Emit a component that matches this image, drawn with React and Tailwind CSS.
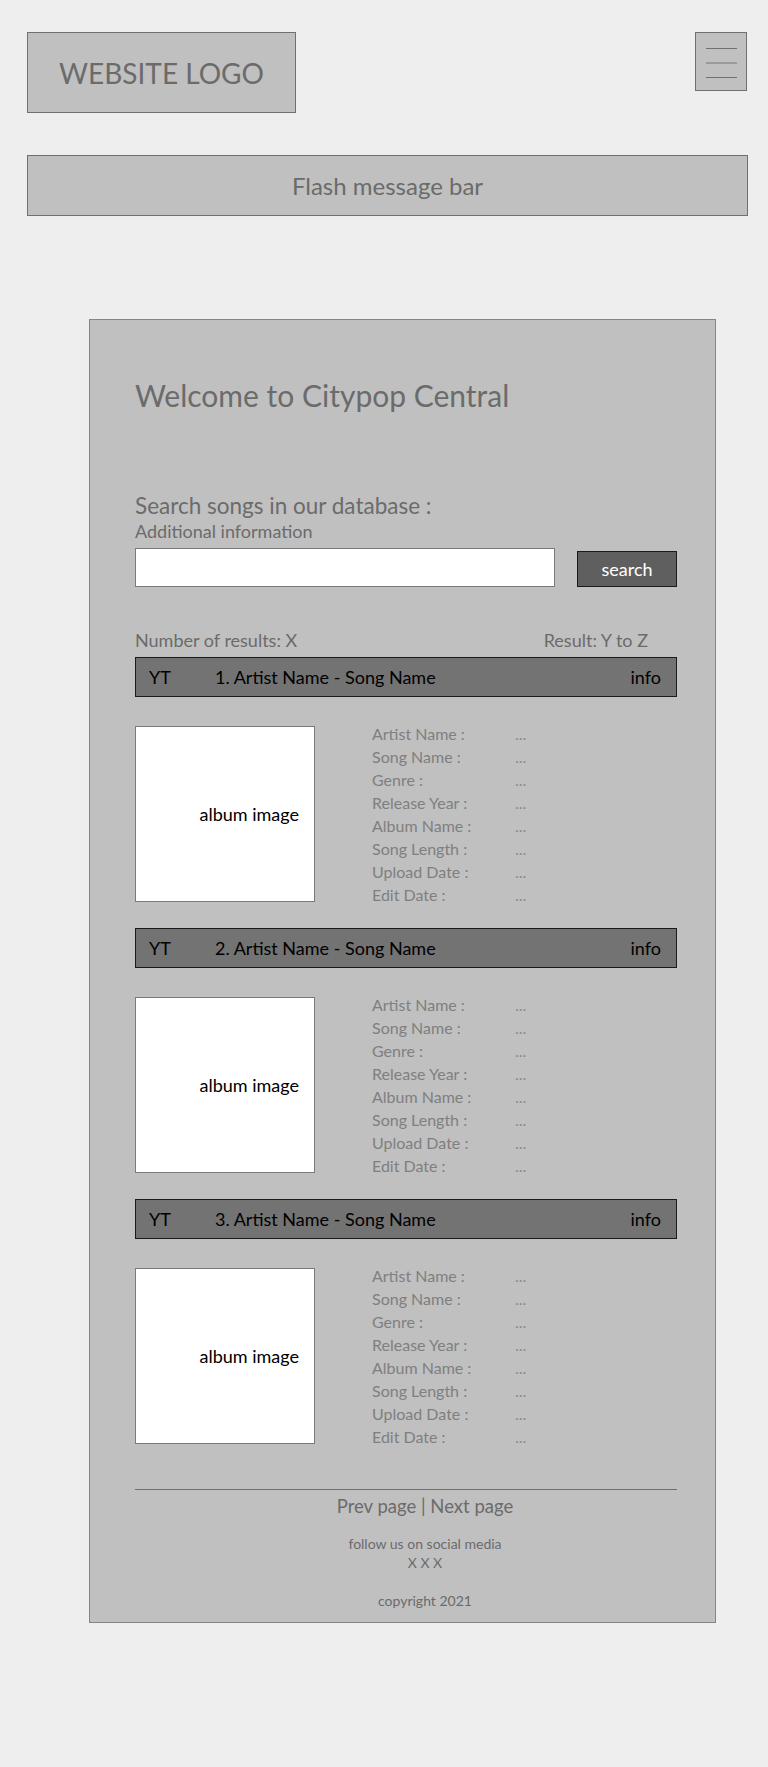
import React from "react";

const fields = [
  "Artist Name :",
  "Song Name :",
  "Genre :",
  "Release Year :",
  "Album Name :",
  "Song Length :",
  "Upload Date :",
  "Edit Date :",
];

function Item({ n }) {
  return (
    <div>
      <div className="flex h-[40px] items-center border border-[#1a1a1a] bg-[#737373] pl-[13px] pr-[15px] text-[18px] text-black">
        <span className="w-[66px]">YT</span>
        <span className="flex-1">{n}. Artist Name - Song Name</span>
        <span>info</span>
      </div>
      <div className="mt-[29px] mb-[26px] flex h-[176px] items-center">
        <div className="flex h-[176px] w-[180px] shrink-0 items-center justify-end border border-[#7a7a7a] bg-white pr-[15px] text-[18px] text-black">
          album image
        </div>
        <div className="ml-[57px] text-[16px] leading-[23.1px] text-[#7f7f7f]">
          {fields.map((f) => (
            <div key={f} className="flex">
              <span className="w-[143px]">{f}</span>
              <span className="text-[#8a8a8a]">...</span>
            </div>
          ))}
        </div>
      </div>
    </div>
  );
}

export default function App() {
  return (
    <div className="min-h-[1767px] bg-[#eeeeee] pt-[32px] font-['Lato',sans-serif] text-[#6b6b6b]">
      <div className="pl-[27px] pr-[20px]">
        <div className="flex items-start justify-between">
          <div className="flex h-[81px] w-[269px] items-center justify-center border border-[#707070] bg-[#c0c0c0] text-[28px]">
            WEBSITE LOGO
          </div>
          <div className="mr-[1px] flex h-[59px] w-[52px] flex-col items-center border border-[#707070] bg-[#c0c0c0] pt-[15px]">
            <div className="h-px w-[31px] bg-[#707070]" />
            <div className="mt-[13px] h-[2px] w-[31px] bg-[#9a9a9a]" />
            <div className="mt-[13px] h-px w-[31px] bg-[#707070]" />
          </div>
        </div>
        <div className="mt-[42px] flex h-[61px] items-center justify-center border border-[#707070] bg-[#c0c0c0] text-[24px]">
          Flash message bar
        </div>
      </div>

      <div className="ml-[89px] mt-[103px] h-[1304px] w-[627px] border border-[#858585] bg-[#c0c0c0] pl-[45px] pr-[38px] pt-[60px]">
        <h1 className="text-[30px] leading-[30px]">Welcome to Citypop Central</h1>
        <div className="mt-[85px] text-[22.5px] leading-[21px]">Search songs in our database :</div>
        <div className="mt-[6px] text-[18px] leading-[18px]">Additional information</div>
        <div className="mt-[8px] flex items-end justify-between">
          <div className="h-[39px] w-[420px] border border-[#7a7a7a] bg-white" />
          <div className="flex h-[36px] w-[100px] items-center justify-center border border-[#1a1a1a] bg-[#5f5f5f] text-[18px] text-white">
            search
          </div>
        </div>
        <div className="mt-[44px] flex justify-between pr-[29px] text-[18px] leading-[18px]">
          <span>Number of results: X</span>
          <span>Result: Y to Z</span>
        </div>
        <div className="mt-[8px]">
          <Item n={1} />
          <Item n={2} />
          <Item n={3} />
        </div>
        <div className="mt-[45px] border-t border-[#6f6f6f]" />
        <div className="-mr-[38px] text-center">
          <div className="mt-[7px] text-[18.5px] leading-[19px]">Prev page | Next page</div>
          <div className="mt-[18px] text-[14px] leading-[19px]">follow us on social media</div>
          <div className="text-[14px] leading-[19px]">X X X</div>
          <div className="mt-[19px] text-[14px] leading-[19px]">copyright 2021</div>
        </div>
      </div>
    </div>
  );
}
